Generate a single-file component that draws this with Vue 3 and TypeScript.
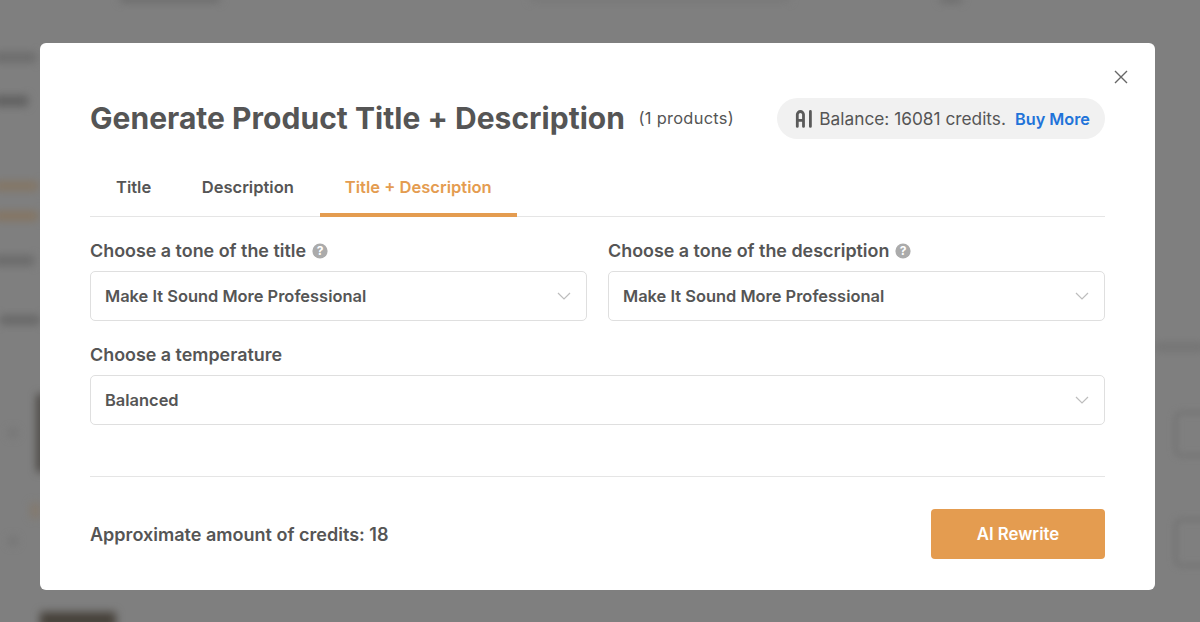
<script setup lang="ts">
const tabs: string[] = ['Title', 'Description', 'Title + Description']
const blurs = [
  { x: -6, y: 53, w: 42, h: 9, c: '#6a6a6a' },
  { x: -6, y: 96, w: 34, h: 10, c: '#5e5e5e' },
  { x: -6, y: 182, w: 44, h: 8, c: '#85745f' },
  { x: -6, y: 212, w: 44, h: 8, c: '#86735c' },
  { x: -6, y: 256, w: 40, h: 9, c: '#686868' },
  { x: 0, y: 316, w: 40, h: 8, c: '#646464' },
  { x: 37, y: 394, w: 8, h: 78, c: '#46423e' },
  { x: 9, y: 429, w: 8, h: 8, c: '#737373' },
  { x: 31, y: 503, w: 9, h: 15, c: '#84796c' },
  { x: 9, y: 537, w: 8, h: 8, c: '#737373' },
  { x: 40, y: 612, w: 76, h: 16, c: '#47423b' },
  { x: 120, y: -5, w: 100, h: 7, c: '#6a6a6a' },
  { x: 530, y: -3, w: 260, h: 4, c: '#747474' },
  { x: 940, y: -3, w: 22, h: 5, c: '#666' },
  { x: 1155, y: 344, w: 50, h: 6, c: '#707070' },
]
</script>

<template>
  <div class="overlay">
    <div class="backdrop" aria-hidden="true">
      <i
        v-for="(b, i) in blurs"
        :key="i"
        class="blob"
        :style="{ left: b.x + 'px', top: b.y + 'px', width: b.w + 'px', height: b.h + 'px', background: b.c }"
      ></i>
      <i class="box box-a"></i>
      <i class="box box-b"></i>
    </div>

    <section class="modal">
      <button class="close" aria-label="Close">
        <svg width="14" height="14" viewBox="0 0 14 14" fill="none" stroke="#666" stroke-width="1.4">
          <path d="M1 1l12 12M13 1L1 13" />
        </svg>
      </button>

      <header class="head">
        <h1>Generate Product Title + Description</h1>
        <span class="count">(1 products)</span>
        <div class="balance">
          <svg class="ai" width="18" height="18" viewBox="0 0 18 18" fill="none" stroke="#5a5a5a" stroke-width="2.8" stroke-linecap="round">
            <path d="M2.3 16.4V4.6a3.1 3.1 0 0 1 6.2 0v11.8M2.3 10.4h6.2M15.4 1.5v14.9" />
          </svg>
          <span>Balance: 16081 credits.</span>
          <a class="buy">Buy More</a>
        </div>
      </header>

      <nav class="tabs">
        <div v-for="(t, i) in tabs" :key="t" class="tab" :class="{ active: i === 2 }">{{ t }}</div>
      </nav>

      <div class="fields">
        <div class="field">
          <label>Choose a tone of the title
            <svg class="help" width="16" height="16" viewBox="0 0 16 16"><circle cx="8" cy="8" r="7.6" fill="#ababab" /><text x="8" y="12.2" text-anchor="middle">?</text></svg>
          </label>
          <div class="select">
            <span>Make It Sound More Professional</span>
            <svg width="14" height="8" viewBox="0 0 14 8" fill="none" stroke="#bdbdbd" stroke-width="1.2"><path d="M1 1l6 6 6-6" /></svg>
          </div>
        </div>
        <div class="field">
          <label>Choose a tone of the description
            <svg class="help" width="16" height="16" viewBox="0 0 16 16"><circle cx="8" cy="8" r="7.6" fill="#ababab" /><text x="8" y="12.2" text-anchor="middle">?</text></svg>
          </label>
          <div class="select">
            <span>Make It Sound More Professional</span>
            <svg width="14" height="8" viewBox="0 0 14 8" fill="none" stroke="#bdbdbd" stroke-width="1.2"><path d="M1 1l6 6 6-6" /></svg>
          </div>
        </div>
        <div class="field wide">
          <label>Choose a temperature</label>
          <div class="select">
            <span>Balanced</span>
            <svg width="14" height="8" viewBox="0 0 14 8" fill="none" stroke="#bdbdbd" stroke-width="1.2"><path d="M1 1l6 6 6-6" /></svg>
          </div>
        </div>
      </div>

      <footer class="foot">
        <div class="credits">Approximate amount of credits: 18</div>
        <button class="rewrite">AI Rewrite</button>
      </footer>
    </section>
  </div>
</template>

<style scoped>
.overlay {
  position: relative;
  width: 1200px;
  height: 622px;
  overflow: hidden;
  box-sizing: border-box;
  padding: 43px 45px 32px 40px;
  background: #7f7f7f;
  font-family: Inter, "Liberation Sans", sans-serif;
  color: #555;
}
.backdrop { position: absolute; inset: 0; }
.blob { position: absolute; filter: blur(4px); border-radius: 2px; }
.box { position: absolute; left: 1174px; width: 60px; border: 3px solid #727272; border-radius: 8px; filter: blur(3px); box-sizing: border-box; }
.box-a { top: 411px; height: 46px; }
.box-b { top: 518px; height: 49px; }
.modal {
  position: relative;
  box-sizing: border-box;
  width: 1115px;
  height: 547px;
  padding: 55px 50px 30px 50px;
  background: #fff;
  border-radius: 6px;
  display: flex;
  flex-direction: column;
}
.close {
  position: absolute;
  top: 27px;
  right: 27px;
  width: 14px;
  height: 14px;
  padding: 0;
  border: 0;
  background: none;
  display: flex;
}
.head { display: flex; align-items: center; height: 41px; }
h1 {
  margin: 0;
  font-size: 30px;
  line-height: 41px;
  font-weight: 700;
  letter-spacing: 0.03px;
  color: #555;
  white-space: nowrap;
}
.count { margin: 0 0 2px 13.5px; font-size: 16.4px; font-weight: 400; letter-spacing: 0.3px; color: #555; }
.balance {
  margin-left: auto;
  height: 41px;
  padding: 0 15px 0 18px;
  box-sizing: border-box;
  background: #f1f1f1;
  border-radius: 21px;
  display: flex;
  align-items: center;
  font-size: 17.3px;
  color: #555;
  white-space: nowrap;
}
.ai { margin-right: 6px; }
.buy { margin-left: 9px; font-size: 16.3px; color: #2173d9; font-weight: 600; }
.tabs {
  display: flex;
  margin-top: 26px;
  height: 51px;
  border-bottom: 1px solid #e5e5e5;
  box-sizing: content-box;
}
.tab {
  padding: 0 26px;
  height: 51px;
  line-height: 45px;
  font-size: 16.55px;
  font-weight: 600;
  color: #555;
  box-sizing: border-box;
}
.tab:first-child { padding: 0 24.5px 0 26px; }
.tab.active { color: #e49c50; border-bottom: 4px solid #e49c50; height: 52px; padding: 0 25px; }
.fields {
  display: grid;
  grid-template-columns: 497px 497px;
  column-gap: 21px;
  row-gap: 21px;
  margin-top: 21px;
}
.wide { grid-column: 1 / 3; }
label {
  display: flex;
  align-items: center;
  gap: 5.5px;
  height: 25px;
  margin-bottom: 8px;
  font-size: 17.9px;
  font-weight: 600;
  color: #555;
}
.help text { font-size: 12px; font-weight: 700; fill: #fff; font-family: Inter, sans-serif; }
.select {
  box-sizing: border-box;
  height: 50px;
  border: 1.5px solid #dfdfdf;
  border-radius: 5px;
  display: flex;
  align-items: center;
  justify-content: space-between;
  padding: 0 15px 0 14px;
  font-size: 16.45px;
  font-weight: 600;
  color: #555;
}
.foot {
  margin-top: 51px;
  border-top: 1px solid #e5e5e5;
  padding-top: 32px;
  display: flex;
  align-items: center;
  justify-content: space-between;
}
.credits { font-size: 18.05px; font-weight: 600; color: #555; }
.rewrite {
  width: 174px;
  height: 50px;
  border: 0;
  border-radius: 4px;
  background: #e49c50;
  color: #fff;
  font: 600 16.8px Inter, "Liberation Sans", sans-serif;
}
</style>
